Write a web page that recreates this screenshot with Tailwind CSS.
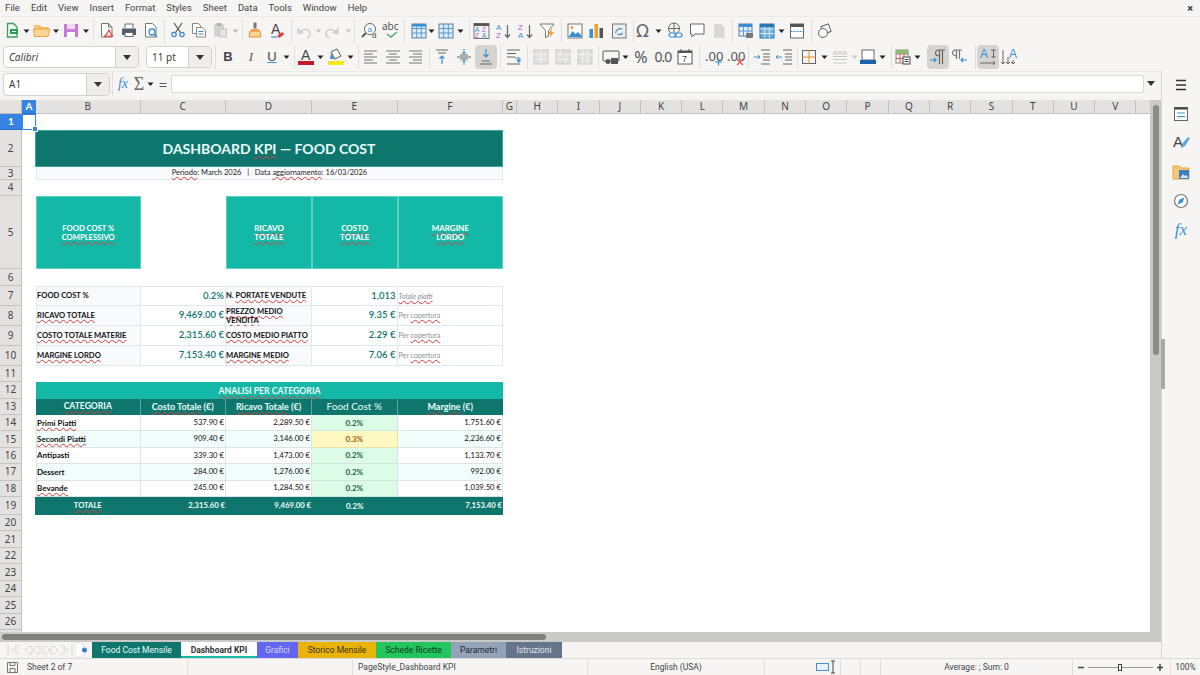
<!doctype html>
<html><head><meta charset="utf-8"><title>Dashboard KPI</title>
<script src="https://cdn.jsdelivr.net/npm/@tailwindcss/browser@4"></script></head>
<body class="w-[1200px] h-[675px] overflow-hidden bg-[#f6f5f4] text-[#3d3d3d] font-['Noto_Sans',sans-serif] flex flex-col">

<!-- menu -->
<nav class="h-[17px] shrink-0 flex items-center pl-[5px] gap-[11px] text-[9.5px] font-['Roboto',sans-serif] leading-none text-[#444] border-b border-[#ecebe9]">
<span>File</span><span>Edit</span><span>View</span><span>Insert</span><span>Format</span><span>Styles</span><span>Sheet</span><span>Data</span><span>Tools</span><span>Window</span><span>Help</span>
<span class="ml-auto mr-[7px] text-[11px] font-bold text-[#333]">×</span>
</nav>

<!-- standard toolbar -->
<div class="h-[28px] shrink-0 flex items-center pl-px">
<svg width="22" height="24"><path d="M6.5 4.5h6l3.5 3.5v10H6.5z" fill="#f1f8f1" stroke="#3f9c5a" stroke-width="1.3"/><rect x="9" y="10" width="8" height="5" fill="#2e9e57"/><path d="M11 12.5h4" stroke="#fff"/></svg>
<svg width="7" height="24"><path d="M.5 10.5h6l-3 3.500z" fill="#222"/></svg>
<svg width="22" height="24"><path d="M4 6h6l2 2h7v4H4z" fill="#f5c06a"/><path d="M4.500 17.500 3.500 10h16L18 17.500z" fill="#fbd596" stroke="#e8a33d"/></svg>
<svg width="8" height="24"><path d="M1 10.500h6l-3 3.500z" fill="#222"/></svg>
<svg width="22" height="24"><rect x="4" y="5" width="14" height="13" fill="#c77ad6"/><rect x="7" y="5" width="8" height="5" fill="#f3d9f7"/><rect x="7" y="13" width="8" height="5" fill="#fff"/></svg>
<svg width="8" height="24"><path d="M1 10.500h6l-3 3.500z" fill="#222"/></svg>
<i class="w-px h-6 ml-[3px] mr-[2px] bg-[#e2e0dd]"></i>
<svg width="22" height="24"><path d="M5.500 4.500h7l3.500 3.500v10H5.500zM12.500 4.500V8H16" fill="#fff" stroke="#777"/><path d="M13 11c-1 3-3 5-5 7 3-1 6-1 9-.5-2-1.500-3-4-4-6.500z" fill="none" stroke="#e0534a" stroke-width="1.200"/></svg>
<svg width="22" height="24"><path d="M7 9V5h8v4" fill="#fff" stroke="#666"/><path d="M4 9.500h14v6.500H4z" fill="#4f5d68"/><rect x="7" y="13.500" width="8" height="4" fill="#fff" stroke="#666"/></svg>
<svg width="22" height="24"><path d="M5.500 4.500h7l3.500 3.500v10H5.500z" fill="#fff" stroke="#777"/><circle cx="12" cy="13" r="3" fill="#fff" stroke="#3b8fd0" stroke-width="1.300"/><path d="m14 15 3 3" stroke="#3b8fd0" stroke-width="1.500"/></svg>
<i class="w-px h-6 ml-[2px] mr-[2px] bg-[#e2e0dd]"></i>
<svg width="22" height="24"><path d="m7 4 6.500 9.500M15 4 8.500 13.500" stroke="#555" stroke-width="1.200"/><circle cx="7" cy="15.500" r="2.200" fill="none" stroke="#3584e4" stroke-width="1.200"/><circle cx="15" cy="15.500" r="2.200" fill="none" stroke="#3584e4" stroke-width="1.200"/></svg>
<svg class="-ml-px" width="22" height="24"><path d="M4.500 4.500h6l2 2v8h-8z" fill="#fff" stroke="#888"/><path d="M8.500 8.500h6l3 3v6.500h-9z" fill="#fff" stroke="#888"/><path d="M10.500 12.500h5M10.500 15h5" stroke="#3b8fd0"/></svg>
<svg width="22" height="24"><rect x="4" y="5.500" width="10" height="12" fill="#d2d2d0"/><rect x="6.500" y="4" width="5" height="3" fill="#b5b5b3"/><rect x="9.500" y="10" width="7" height="8" fill="#e4e4e2" stroke="#c3c3c1"/></svg>
<svg width="7" height="24"><path d="M.5 10.500h6l-3 3.500z" fill="#bdbdbb"/></svg>
<i class="w-px h-6 ml-[3px] mr-px bg-[#e2e0dd]"></i>
<svg width="22" height="24"><rect x="9.500" y="3.500" width="3" height="6" fill="#777"/><path d="M7 10h8v2H7z" fill="#f4a64a"/><path d="M6 12h10l1 6H5z" fill="#fbd596" stroke="#e58f2a"/></svg>
<svg width="22" height="24"><text x="5" y="15" font-size="14" font-family="Liberation Sans" fill="#444">A</text><path d="m11 17 5-4 2.500 2-5 4z" fill="#e0403a"/><path d="M5 18h6" stroke="#3b8fd0" stroke-width="1.200"/></svg>
<i class="w-px h-6 ml-[3px] bg-[#e2e0dd]"></i>
<svg width="22" height="24"><path d="M8 14c3-5 9-4 10 0 .5 2-1 4-3 5" fill="none" stroke="#cfcfcd" stroke-width="1.500"/><path d="M5 8.500l.5 7 6.500-1.500z" fill="#cfcfcd"/></svg>
<svg class="ml-px" width="7" height="24"><path d="M.5 10.500h6l-3 3.500z" fill="#c9c9c7"/></svg>
<svg width="22" height="24"><path d="M14 14c-3-5-9-4-10 0-.5 2 1 4 3 5" fill="none" stroke="#cfcfcd" stroke-width="1.500"/><path d="M17 8.500l-.5 7-6.500-1.500z" fill="#cfcfcd"/></svg>
<svg class="ml-px" width="7" height="24"><path d="M.5 10.500h6l-3 3.500z" fill="#c9c9c7"/></svg>
<i class="w-px h-6 ml-[2px] mr-[3px] bg-[#e2e0dd]"></i>
<svg width="22" height="24"><circle cx="12" cy="10" r="5.500" fill="#fff" stroke="#666"/><path d="m8 14-4 4" stroke="#555" stroke-width="2"/><text x="9.500" y="12.500" font-size="8" font-family="Liberation Sans" fill="#3b8fd0">a</text><text x="14" y="19" font-size="8" font-family="Liberation Sans" fill="#444">d</text></svg>
<svg width="22" height="24"><text x="2" y="11" font-size="10" font-family="Noto Sans" fill="#555">abc</text><path d="m7 15 4 3 6-5" fill="none" stroke="#4caf6d" stroke-width="1.500"/></svg>
<i class="w-px h-6 ml-[2px] mr-[3px] bg-[#e2e0dd]"></i>
<svg width="22" height="24"><rect x="4" y="5" width="14" height="14" fill="#dcecf9" stroke="#5a7f9f"/><path d="M4 9.500h14M4 14h14M8.700 5v14M13.300 5v14" stroke="#5a9bd0"/><rect x="4" y="5" width="14" height="2.500" fill="#3b8fd0"/></svg>
<svg class="-ml-[2px]" width="7" height="24"><path d="M.5 10.500h6l-3 3.500z" fill="#222"/></svg>
<svg width="22" height="24"><rect x="4" y="5" width="14" height="14" fill="#dcecf9" stroke="#5a7f9f"/><path d="M4 9.500h14M4 14h14M8.700 5v14M13.300 5v14" stroke="#5a9bd0"/></svg>
<svg width="7" height="24"><path d="M.5 10.500h6l-3 3.500z" fill="#222"/></svg>
<i class="w-px h-6 ml-[5px] bg-[#e2e0dd]"></i>
<svg width="22" height="24"><rect x="4" y="4.500" width="15" height="15" fill="#f2f2f0" stroke="#777"/><rect x="4" y="4.500" width="15" height="2.500" fill="#555"/><text x="5" y="13" font-size="6.500" font-family="Liberation Sans" fill="#3b8fd0">A</text><text x="12" y="13" font-size="6.500" font-family="Liberation Sans" fill="#c05bc9">Z</text><text x="5" y="19" font-size="6.500" font-family="Liberation Sans" fill="#c05bc9">Z</text><text x="12" y="19" font-size="6.500" font-family="Liberation Sans" fill="#3b8fd0">A</text></svg>
<svg class="ml-px" width="22" height="24"><text x="3" y="11" font-size="8" font-family="Liberation Sans" fill="#3b8fd0">A</text><text x="3" y="19" font-size="8" font-family="Liberation Sans" fill="#c05bc9">Z</text><path d="M14.500 6v12M12 15.500l2.500 3 2.500-3" fill="none" stroke="#666" stroke-width="1.200"/></svg>
<svg width="22" height="24"><text x="3" y="11" font-size="8" font-family="Liberation Sans" fill="#c05bc9">Z</text><text x="3" y="19" font-size="8" font-family="Liberation Sans" fill="#3b8fd0">A</text><path d="M14.500 6v12M12 15.500l2.500 3 2.500-3" fill="none" stroke="#666" stroke-width="1.200"/></svg>
<svg class="-ml-px" width="22" height="24"><path d="M4 5h14l-5.500 6.500V17l-3 1.500v-7z" fill="#fff" stroke="#777"/><path d="m16 9-4 6h2.500l-1 4 4.500-6h-2.500z" fill="#f0a030"/></svg>
<i class="w-px h-6 ml-[3px] mr-[2px] bg-[#e2e0dd]"></i>
<svg width="22" height="24"><rect x="4" y="5" width="14" height="14" fill="#fff" stroke="#777"/><path d="m4.500 18 4-6 3 3 2.500-2 4 4v1z" fill="#3b8fd0"/><circle cx="8" cy="8.500" r="1.500" fill="#f0a030"/></svg>
<svg class="-ml-px" width="22" height="24"><rect x="4.500" y="10" width="3.500" height="9" fill="#3b8fd0"/><rect x="9.500" y="5" width="3.500" height="14" fill="#f0a030"/><rect x="14.500" y="9" width="3.500" height="10" fill="#555"/></svg>
<svg class="ml-px" width="22" height="24"><rect x="4.500" y="5" width="13.500" height="14" fill="#efefed" stroke="#777"/><path d="M7.500 14a5 5 0 0 1 7-4m0 4a4 4 0 0 1-5 1" fill="none" stroke="#3b8fd0" stroke-width="1.200"/></svg>
<i class="w-px h-6 ml-[3px] -mr-px bg-[#e2e0dd]"></i>
<svg width="22" height="24"><text x="3" y="18" font-size="17" font-family="DejaVu Sans" fill="#666">Ω</text></svg>
<svg width="7" height="24"><path d="M.5 10.500h6l-3 3.500z" fill="#222"/></svg>
<svg class="ml-[2px]" width="22" height="24"><circle cx="10" cy="9.500" r="5.500" fill="none" stroke="#666"/><path d="M4.500 9.500h11M10 4v11" stroke="#666"/><rect x="5" y="14" width="7" height="4" rx="2" fill="#f6f5f4" stroke="#3b8fd0" stroke-width="1.200"/><rect x="11" y="14" width="7" height="4" rx="2" fill="none" stroke="#3b8fd0" stroke-width="1.200"/></svg>
<svg width="22" height="24"><path d="M4.500 5h13.500v10H9l-3 3v-3H4.500z" fill="#fff" stroke="#666"/></svg>
<svg width="22" height="24"><path d="M6 5h7l3.500 3.500V19H6z" fill="#d8d8d6"/></svg>
<i class="w-px h-6 ml-[2px] mr-[2px] bg-[#e2e0dd]"></i>
<svg width="22" height="24"><rect x="4" y="5" width="13" height="12" fill="#e6f0f9" stroke="#5a7f9f"/><rect x="4" y="5" width="13" height="3" fill="#3b8fd0"/><path d="M4 12h13M8.500 8v9M13 8v9" stroke="#5a9bd0"/><rect x="11" y="14" width="7" height="5" rx="1" fill="#777"/></svg>
<svg class="-ml-px" width="22" height="24"><rect x="4" y="5" width="14" height="14" fill="#6fb0e3" stroke="#2d75ad"/><path d="M4 10h14M4 14.500h14M8.700 5v14M13.300 5v14" stroke="#d5e8f7"/><rect x="4" y="5" width="14" height="3" fill="#2d75ad"/></svg>
<svg width="7" height="24"><path d="M.5 10.500h6l-3 3.500z" fill="#222"/></svg>
<svg class="ml-px" width="22" height="24"><rect x="4.500" y="5" width="13" height="14" fill="#fff" stroke="#666"/><rect x="4.500" y="5" width="13" height="3" fill="#555"/><path d="M4.500 12.500h13" stroke="#3b8fd0" stroke-dasharray="2 1"/></svg>
<i class="w-px h-6 ml-[3px] mr-[2px] bg-[#e2e0dd]"></i>
<svg width="22" height="24"><rect x="8" y="6" width="8" height="8" fill="none" stroke="#666" transform="rotate(-20 12 10)"/><circle cx="9" cy="14" r="4.500" fill="#f6f5f4" stroke="#666"/></svg>
</div>

<!-- formatting toolbar -->
<div class="h-[26px] shrink-0 flex items-center pl-[3px] pb-[2px]">
<div class="w-[136px] h-[22px] flex rounded-[4px] border border-[#d3d1ce] bg-white overflow-hidden">
<span class="flex-1 pl-[5px] text-[10px] italic leading-[20px]">Calibri</span>
<span class="w-[23px] border-l border-[#d3d1ce] bg-[#efeeec] flex items-center justify-center"><svg width="8" height="5"><path d="M0 0h8L4 5z" fill="#333"/></svg></span></div>
<div class="ml-[7px] w-[66px] h-[22px] flex rounded-[4px] border border-[#d3d1ce] bg-white overflow-hidden">
<span class="flex-1 pl-[5px] text-[10px] leading-[20px]">11 pt</span>
<span class="w-[23px] border-l border-[#d3d1ce] bg-[#efeeec] flex items-center justify-center"><svg width="8" height="5"><path d="M0 0h8L4 5z" fill="#333"/></svg></span></div>
<i class="w-px h-6 ml-[3px] mr-px bg-[#e2e0dd]"></i>
<span class="w-[22px] text-center text-[13px] font-bold font-['Liberation_Sans',sans-serif] text-[#444]">B</span>
<span class="ml-px w-[22px] text-center text-[13px] italic font-['Liberation_Serif',serif] text-[#555]">I</span>
<span class="-ml-px w-[22px] text-center text-[13px] font-['Liberation_Sans',sans-serif] text-[#444] underline decoration-[#3b8fd0]">U</span>
<svg width="7" height="24"><path d="M.5 10.500h6l-3 3.500z" fill="#222"/></svg>
<i class="w-px h-6 ml-[4px] bg-[#e2e0dd]"></i>
<svg width="22" height="24"><text x="6" y="15" font-size="14" font-family="Liberation Sans" fill="#444">A</text><rect x="3" y="16" width="16" height="4" fill="#c01c28"/></svg>
<svg width="7" height="24"><path d="M.5 10.500h6l-3 3.500z" fill="#222"/></svg>
<svg class="ml-px" width="22" height="24"><path d="m6 7 6-3 4 7-6 3z" fill="#fff" stroke="#555"/><path d="m6 8 3 6H5z" fill="#3b8fd0"/><rect x="3" y="16" width="16" height="4" fill="#f6e71d"/></svg>
<svg width="7" height="24"><path d="M.5 10.500h6l-3 3.500z" fill="#222"/></svg>
<i class="w-px h-6 ml-[4px] mr-px bg-[#e2e0dd]"></i>
<svg width="22" height="24"><path d="M4 6h13M4 9h9M4 12h13M4 15h9M4 18h13" stroke="#777"/></svg>
<svg width="22" height="24"><path d="M4 6h14M7 9h8M4 12h14M7 15h8M4 18h14" stroke="#777"/></svg>
<svg width="22" height="24"><path d="M5 6h13M9 9h9M5 12h13M9 15h9M5 18h13" stroke="#777"/></svg>
<i class="w-px h-6 ml-[3px] mr-px bg-[#e2e0dd]"></i>
<svg width="22" height="24"><path d="M5 5h12M7 8h8" stroke="#666"/><path d="M11 19v-8M8.500 13.500l2.500-2.500 2.500 2.500" fill="none" stroke="#3b8fd0" stroke-width="1.200"/></svg>
<svg width="22" height="24"><path d="M4 12h14M7 10h8M7 14h8" stroke="#666"/><path d="M11 4v5M9 7l2 2 2-2M11 20v-5M9 17l2-2 2 2" fill="none" stroke="#3b8fd0"/></svg>
<span class="w-[22px] h-[24px] rounded-[4px] bg-[#d6d4d0] flex items-center justify-center"><svg width="22" height="24"><path d="M11 4v8M8.500 9.500 11 12l2.500-2.500" fill="none" stroke="#3b8fd0" stroke-width="1.200"/><path d="M7 16h8M5 19h12" stroke="#666"/></svg></span>
<i class="w-px h-6 ml-[3px] mr-[2px] bg-[#e2e0dd]"></i>
<svg width="22" height="24"><path d="M4 5h13M4 8.500h9M4 12h8M4 19h13" stroke="#666"/><path d="M12 13h5v2l-3 .5" fill="none" stroke="#3b8fd0"/><path d="m14 13.500 4 2.500-3 2z" fill="#3b8fd0"/></svg>
<i class="w-px h-6 ml-[2px] mr-[2px] bg-[#e2e0dd]"></i>
<svg width="22" height="24"><rect x="4" y="5" width="14" height="14" fill="#e0e0de" stroke="#c8c8c6"/><path d="M4 9.500h14M4 14h14M11 5v14" stroke="#f2f2f0"/></svg>
<svg width="22" height="24"><rect x="4" y="5" width="14" height="14" fill="#e0e0de" stroke="#c8c8c6"/><path d="M4 9.500h14M4 14h14M8.500 5v4M13.500 14v5" stroke="#f2f2f0"/></svg>
<svg width="22" height="24"><rect x="4" y="5" width="14" height="14" fill="#e0e0de" stroke="#c8c8c6"/><path d="M4 9.500h14M8.700 5v14M13.300 5v14" stroke="#f2f2f0"/></svg>
<i class="w-px h-6 ml-[2px] mr-px bg-[#e2e0dd]"></i>
<svg width="22" height="24"><rect x="3" y="6" width="16" height="10" rx="1" fill="#f6f5f4" stroke="#555"/><circle cx="8" cy="16.500" r="2.500" fill="#555"/><rect x="11" y="13" width="7" height="6" fill="#555"/></svg>
<svg width="7" height="24"><path d="M.5 10.500h6l-3 3.500z" fill="#222"/></svg>
<span class="ml-px w-[22px] text-center text-[16px] leading-none text-[#555]">%</span>
<span class="w-[22px] text-center text-[14px] leading-none tracking-[-1px] text-[#555]">0.0</span>
<svg width="22" height="24"><rect x="4" y="6" width="14" height="13" fill="#fff" stroke="#555"/><rect x="4" y="6" width="14" height="2" fill="#555"/><path d="M7 4v3M15 4v3" stroke="#555"/><text x="8" y="17" font-size="9" font-family="Liberation Sans" fill="#444">7</text></svg>
<i class="w-px h-6 ml-[3px] mr-[2px] bg-[#e2e0dd]"></i>
<svg width="22" height="24"><text x="3" y="16" font-size="13" font-family="Noto Sans" fill="#555">.00</text><path d="M13 17h7M16.500 13.500v7" stroke="#3b8fd0" stroke-width="1.200"/></svg>
<svg width="22" height="24"><text x="3" y="16" font-size="13" font-family="Noto Sans" fill="#555">.00</text><path d="m13 14 6 6m0-6-6 6" stroke="#e0534a" stroke-width="1.200"/></svg>
<i class="w-px h-6 ml-[2px] mr-[2px] bg-[#e2e0dd]"></i>
<svg width="22" height="24"><path d="M10 5h9M12 9h7M12 12h7M12 15h7M10 19h9" stroke="#666"/><path d="M3 12h6M7 10l2 2-2 2" fill="none" stroke="#3b8fd0"/></svg>
<svg width="22" height="24"><path d="M10 5h9M12 9h7M12 12h7M12 15h7M10 19h9" stroke="#666"/><path d="M9 12H3M5 10l-2 2 2 2" fill="none" stroke="#3b8fd0"/></svg>
<i class="w-px h-6 ml-[2px] bg-[#e2e0dd]"></i>
<svg width="22" height="24"><rect x="4.500" y="5.500" width="13" height="13" fill="none" stroke="#666"/><path d="M11 5.500v13M4.500 12h13" stroke="#e58f2a"/></svg>
<svg class="ml-px" width="7" height="24"><path d="M.5 10.500h6l-3 3.500z" fill="#222"/></svg>
<svg class="ml-px" width="22" height="24"><path d="M4 7h14M4 9h14M4 11.500h14M4 14.500h14M4 18h14" stroke="#c6c6c4"/></svg>
<svg width="7" height="24"><path d="M.5 10.500h6l-3 3.500z" fill="#c9c9c7"/></svg>
<svg class="-ml-px" width="22" height="24"><rect x="5" y="5" width="12" height="10" fill="#fff" stroke="#666"/><rect x="3" y="15" width="16" height="4" fill="#1c64a8"/></svg>
<svg width="7" height="24"><path d="M.5 10.500h6l-3 3.500z" fill="#222"/></svg>
<i class="w-px h-6 ml-[5px] bg-[#e2e0dd]"></i>
<svg width="22" height="24"><rect x="4" y="5" width="12" height="13" fill="#fff" stroke="#888"/><path d="M4 9h12M4 13.500h12M8 5v13M12 5v13" stroke="#c55"/><rect x="4" y="5" width="12" height="4" fill="#8dbb75"/><rect x="11" y="12" width="7" height="7" fill="#fff" stroke="#444"/><path d="M12.500 14.500h4M12.500 16.500h4" stroke="#444"/></svg>
<svg width="7" height="24"><path d="M.5 10.500h6l-3 3.500z" fill="#222"/></svg>
<span class="ml-[6px] w-[22px] h-[24px] rounded-[4px] bg-[#d6d4d0] flex items-center justify-center"><svg width="22" height="24"><path d="M11 5h7M12.500 5v14M15.500 5v14M12.500 5c-3 0-4 1-4 3s1 3 4 3" fill="none" stroke="#666" stroke-width="1.200"/><path d="M3 15h6M7 13l2 2-2 2" fill="none" stroke="#3b8fd0" stroke-width="1.200"/></svg></span>
<svg width="22" height="24"><path d="M5 5h8M7.500 5v9M10.500 5v9M7.500 5c-3 0-4 1-4 2.500S5 11 7.500 11" fill="none" stroke="#777" stroke-width="1.200"/><path d="M18 15h-6M14 13l-2 2 2 2" fill="none" stroke="#3b8fd0" stroke-width="1.200"/></svg>
<i class="w-px h-6 ml-[4px] mr-px bg-[#e2e0dd]"></i>
<span class="w-[22px] h-[24px] rounded-[4px] bg-[#d6d4d0] flex items-center justify-center"><svg width="22" height="24"><text x="3" y="13" font-size="12" font-family="Liberation Sans" fill="#3b8fd0">A</text><path d="M14 5h5M16.500 5v8M14.500 11l2 2 2-2" fill="none" stroke="#666"/><path d="M3 18h15M16 16l2 2-2 2" fill="none" stroke="#666"/></svg></span>
<svg width="22" height="24"><text x="10" y="13" font-size="12" font-family="Liberation Sans" fill="#3b8fd0">A</text><path d="M4 5v14M2 17l2 2 2-2M9 12v7M7 17l2 2 2-2M14 15v4M12 17l2 2 2-2" fill="none" stroke="#666"/></svg>
</div>

<!-- work area -->
<div class="flex-1 min-h-0 flex">
<div class="w-[1161px] shrink-0 flex flex-col">

<!-- formula bar -->
<div class="h-[29px] shrink-0 flex items-center pl-[3px] border-t border-[#eceae8] pb-[4px]">
<div class="w-[107px] h-[23px] flex rounded-[4px] border border-[#d3d1ce] bg-white overflow-hidden">
<span class="flex-1 pl-[5px] text-[10px] leading-[21px]">A1</span>
<span class="w-[23px] border-l border-[#d3d1ce] bg-[#efeeec] flex items-center justify-center"><svg width="8" height="5"><path d="M0 0h8L4 5z" fill="#333"/></svg></span></div>
<i class="w-px h-6 ml-[2px] mr-[2px] bg-[#e2e0dd]"></i>
<span class="w-[16px] text-center text-[14px] italic font-['Liberation_Serif',serif] text-[#3b8fd0] leading-none">fx</span>
<span class="ml-[1px] w-[14px] text-center text-[18px] leading-none text-[#666] font-['Liberation_Serif',serif]">Σ</span>
<svg class="ml-[1px]" width="7" height="24"><path d="M.5 10.500h6l-3 3.500z" fill="#222"/></svg>
<span class="ml-[3px] w-[12px] text-center text-[15px] leading-none text-[#555]">=</span>
<div class="ml-[2px] w-[973px] h-[18px] bg-white border border-[#dcdad7] rounded-[2px]"></div>
<svg class="ml-[2px]" width="10" height="6"><path d="M1 0h8L5 5z" fill="#333"/></svg>
</div>

<!-- sheet -->
<div class="flex-1 min-h-0 flex">
<div class="w-[1150px] shrink-0 overflow-hidden bg-white font-['Lato',sans-serif] text-[#111] grid grid-cols-[22px_14px_104.5px_85.5px_86px_85.5px_105.5px_14px_repeat(15,41.3px)_1fr] grid-rows-[14px_16px_37px_13px_16px_73px_17px_repeat(4,20px)_16px_16.5px_16.5px_repeat(5,16.4px)_18px_repeat(7,16.5px)_1fr]">
<!-- column headers -->
<div class="bg-[#e3e2e0] border-r border-b border-[#bdbcb9]"></div>
<div class="bg-[#3584e4] text-white font-bold text-[10px] flex items-center justify-center border-b border-[#2a6fc4]">A</div>
<div class="bg-[#e3e2e0] border-r border-b border-[#c4c3c0] text-[#444] text-[10px] font-['Noto_Sans'] flex items-center justify-center">B</div>
<div class="bg-[#e3e2e0] border-r border-b border-[#c4c3c0] text-[#444] text-[10px] font-['Noto_Sans'] flex items-center justify-center">C</div>
<div class="bg-[#e3e2e0] border-r border-b border-[#c4c3c0] text-[#444] text-[10px] font-['Noto_Sans'] flex items-center justify-center">D</div>
<div class="bg-[#e3e2e0] border-r border-b border-[#c4c3c0] text-[#444] text-[10px] font-['Noto_Sans'] flex items-center justify-center">E</div>
<div class="bg-[#e3e2e0] border-r border-b border-[#c4c3c0] text-[#444] text-[10px] font-['Noto_Sans'] flex items-center justify-center">F</div>
<div class="bg-[#e3e2e0] border-r border-b border-[#c4c3c0] text-[#444] text-[10px] font-['Noto_Sans'] flex items-center justify-center">G</div>
<div class="bg-[#e3e2e0] border-r border-b border-[#c4c3c0] text-[#444] text-[10px] font-['Noto_Sans'] flex items-center justify-center">H</div>
<div class="bg-[#e3e2e0] border-r border-b border-[#c4c3c0] text-[#444] text-[10px] font-['Noto_Sans'] flex items-center justify-center">I</div>
<div class="bg-[#e3e2e0] border-r border-b border-[#c4c3c0] text-[#444] text-[10px] font-['Noto_Sans'] flex items-center justify-center">J</div>
<div class="bg-[#e3e2e0] border-r border-b border-[#c4c3c0] text-[#444] text-[10px] font-['Noto_Sans'] flex items-center justify-center">K</div>
<div class="bg-[#e3e2e0] border-r border-b border-[#c4c3c0] text-[#444] text-[10px] font-['Noto_Sans'] flex items-center justify-center">L</div>
<div class="bg-[#e3e2e0] border-r border-b border-[#c4c3c0] text-[#444] text-[10px] font-['Noto_Sans'] flex items-center justify-center">M</div>
<div class="bg-[#e3e2e0] border-r border-b border-[#c4c3c0] text-[#444] text-[10px] font-['Noto_Sans'] flex items-center justify-center">N</div>
<div class="bg-[#e3e2e0] border-r border-b border-[#c4c3c0] text-[#444] text-[10px] font-['Noto_Sans'] flex items-center justify-center">O</div>
<div class="bg-[#e3e2e0] border-r border-b border-[#c4c3c0] text-[#444] text-[10px] font-['Noto_Sans'] flex items-center justify-center">P</div>
<div class="bg-[#e3e2e0] border-r border-b border-[#c4c3c0] text-[#444] text-[10px] font-['Noto_Sans'] flex items-center justify-center">Q</div>
<div class="bg-[#e3e2e0] border-r border-b border-[#c4c3c0] text-[#444] text-[10px] font-['Noto_Sans'] flex items-center justify-center">R</div>
<div class="bg-[#e3e2e0] border-r border-b border-[#c4c3c0] text-[#444] text-[10px] font-['Noto_Sans'] flex items-center justify-center">S</div>
<div class="bg-[#e3e2e0] border-r border-b border-[#c4c3c0] text-[#444] text-[10px] font-['Noto_Sans'] flex items-center justify-center">T</div>
<div class="bg-[#e3e2e0] border-r border-b border-[#c4c3c0] text-[#444] text-[10px] font-['Noto_Sans'] flex items-center justify-center">U</div>
<div class="bg-[#e3e2e0] border-r border-b border-[#c4c3c0] text-[#444] text-[10px] font-['Noto_Sans'] flex items-center justify-center">V</div>
<div class="bg-[#e3e2e0] border-b border-[#c4c3c0]"></div>

<!-- row 1 -->
<div class="col-start-1 bg-[#3584e4] text-white font-bold text-[10px] flex items-center justify-center border-b border-[#2a6fc4]">1</div>
<div class="relative border border-[#3584e4]"><i class="absolute -right-[3px] -bottom-[3px] w-[4px] h-[4px] bg-[#3584e4] border border-white box-content"></i></div>
<!-- row 2 -->
<div class="col-start-1 bg-[#e3e2e0] border-r border-b border-[#c4c3c0] text-[#444] text-[10px] font-['Noto_Sans'] flex items-center justify-center">2</div>
<div class="col-start-3 col-span-5 -ml-px bg-[#0f766e] border border-[#3aa598] text-[#eafffb] font-bold text-[14px] flex items-center justify-center">DASHBOARD&nbsp;<span class="underline decoration-wavy decoration-[#d83a3a] decoration-1">KPI</span>&nbsp;— FOOD COST</div>
<!-- row 3 -->
<div class="col-start-1 bg-[#e3e2e0] border-r border-b border-[#c4c3c0] text-[#444] text-[10px] font-['Noto_Sans'] flex items-center justify-center">3</div>
<div class="col-start-3 col-span-5 bg-[#f8fafc] border-b border-x border-[#e2e8f0] text-[7.5px] text-[#222] flex items-center justify-center whitespace-pre"><span class="underline decoration-wavy decoration-[#d83a3a] decoration-1">Periodo</span>: March 2026   |   Data <span class="underline decoration-wavy decoration-[#d83a3a] decoration-1">aggiornamento</span>: 16/03/2026</div>
<!-- row 4 -->
<div class="col-start-1 bg-[#e3e2e0] border-r border-b border-[#c4c3c0] text-[#444] text-[10px] font-['Noto_Sans'] flex items-center justify-center">4</div>
<!-- row 5 -->
<div class="col-start-1 bg-[#e3e2e0] border-r border-b border-[#c4c3c0] text-[#444] text-[10px] font-['Noto_Sans'] flex items-center justify-center">5</div>
<div class="col-start-3 bg-[#14b8a6] border border-[#5fd0c3] text-white font-bold text-[7.6px] leading-[9px] text-center flex items-center justify-center"><span>FOOD COST %<br><span class="underline decoration-wavy decoration-[#d83a3a] decoration-1">COMPLESSIVO</span></span></div>
<div class="col-start-5 bg-[#14b8a6] border border-[#5fd0c3] text-white font-bold text-[8px] leading-[9px] text-center flex items-center justify-center"><span class="underline decoration-wavy decoration-[#d83a3a] decoration-1">RICAVO<br>TOTALE</span></div>
<div class="bg-[#14b8a6] border border-[#5fd0c3] text-white font-bold text-[8px] leading-[9px] text-center flex items-center justify-center"><span class="underline decoration-wavy decoration-[#d83a3a] decoration-1">COSTO<br>TOTALE</span></div>
<div class="bg-[#14b8a6] border border-[#5fd0c3] text-white font-bold text-[8px] leading-[9px] text-center flex items-center justify-center"><span class="underline decoration-wavy decoration-[#d83a3a] decoration-1">MARGINE<br>LORDO</span></div>
<!-- row 6 -->
<div class="col-start-1 bg-[#e3e2e0] border-r border-b border-[#c4c3c0] text-[#444] text-[10px] font-['Noto_Sans'] flex items-center justify-center">6</div>
<!-- row 7 -->
<div class="col-start-1 bg-[#e3e2e0] border-r border-b border-[#c4c3c0] text-[#444] text-[10px] font-['Noto_Sans'] flex items-center justify-center">7</div>
<div class="col-start-3 bg-[#f8fafc] border border-[#e2e8f0] font-bold text-[7.6px] flex items-center">FOOD COST %</div>
<div class="border-y border-r border-[#e2e8f0] text-[#0f766e] font-semibold text-[9.5px] pr-px flex items-center justify-end">0.2%</div>
<div class="bg-[#f8fafc] border-y border-r border-[#e2e8f0] font-bold text-[7.6px] flex items-center whitespace-nowrap"><span>N. <span class="underline decoration-wavy decoration-[#d83a3a] decoration-1">PORTATE VENDUTE</span></span></div>
<div class="border-y border-r border-[#e2e8f0] text-[#0f766e] font-semibold text-[9.5px] pr-px flex items-center justify-end">1,013</div>
<div class="border-y border-r border-[#e2e8f0] text-[#8a8f96] italic text-[7px] pl-px flex items-center"><span class="underline decoration-wavy decoration-[#d83a3a] decoration-1">Totale piatti</span></div>
<!-- row 8 -->
<div class="col-start-1 bg-[#e3e2e0] border-r border-b border-[#c4c3c0] text-[#444] text-[10px] font-['Noto_Sans'] flex items-center justify-center">8</div>
<div class="col-start-3 bg-[#f8fafc] border-x border-b border-[#e2e8f0] font-bold text-[7.6px] flex items-center"><span class="underline decoration-wavy decoration-[#d83a3a] decoration-1">RICAVO TOTALE</span></div>
<div class="border-b border-r border-[#e2e8f0] text-[#0f766e] font-semibold text-[9.5px] pr-px flex items-center justify-end">9,469.00 €</div>
<div class="bg-[#f8fafc] border-b border-r border-[#e2e8f0] font-bold text-[7.6px] leading-[9px] flex items-center"><span class="underline decoration-wavy decoration-[#d83a3a] decoration-1">PREZZO MEDIO<br>VENDITA</span></div>
<div class="border-b border-r border-[#e2e8f0] text-[#0f766e] font-semibold text-[9.5px] pr-px flex items-center justify-end">9.35 €</div>
<div class="border-b border-r border-[#e2e8f0] text-[#8a8f96] text-[7px] pl-px flex items-center"><span>Per <span class="underline decoration-wavy decoration-[#d83a3a] decoration-1">copertura</span></span></div>
<!-- row 9 -->
<div class="col-start-1 bg-[#e3e2e0] border-r border-b border-[#c4c3c0] text-[#444] text-[10px] font-['Noto_Sans'] flex items-center justify-center">9</div>
<div class="col-start-3 bg-[#f8fafc] border-x border-b border-[#e2e8f0] font-bold text-[7.6px] flex items-center whitespace-nowrap"><span class="underline decoration-wavy decoration-[#d83a3a] decoration-1">COSTO TOTALE MATERIE</span></div>
<div class="border-b border-r border-[#e2e8f0] text-[#0f766e] font-semibold text-[9.5px] pr-px flex items-center justify-end">2,315.60 €</div>
<div class="bg-[#f8fafc] border-b border-r border-[#e2e8f0] font-bold text-[7.6px] flex items-center whitespace-nowrap"><span class="underline decoration-wavy decoration-[#d83a3a] decoration-1">COSTO MEDIO PIATTO</span></div>
<div class="border-b border-r border-[#e2e8f0] text-[#0f766e] font-semibold text-[9.5px] pr-px flex items-center justify-end">2.29 €</div>
<div class="border-b border-r border-[#e2e8f0] text-[#8a8f96] text-[7px] pl-px flex items-center"><span>Per <span class="underline decoration-wavy decoration-[#d83a3a] decoration-1">copertura</span></span></div>
<!-- row 10 -->
<div class="col-start-1 bg-[#e3e2e0] border-r border-b border-[#c4c3c0] text-[#444] text-[10px] font-['Noto_Sans'] flex items-center justify-center">10</div>
<div class="col-start-3 bg-[#f8fafc] border-x border-b border-[#e2e8f0] font-bold text-[7.6px] flex items-center"><span class="underline decoration-wavy decoration-[#d83a3a] decoration-1">MARGINE LORDO</span></div>
<div class="border-b border-r border-[#e2e8f0] text-[#0f766e] font-semibold text-[9.5px] pr-px flex items-center justify-end">7,153.40 €</div>
<div class="bg-[#f8fafc] border-b border-r border-[#e2e8f0] font-bold text-[7.6px] flex items-center"><span class="underline decoration-wavy decoration-[#d83a3a] decoration-1">MARGINE MEDIO</span></div>
<div class="border-b border-r border-[#e2e8f0] text-[#0f766e] font-semibold text-[9.5px] pr-px flex items-center justify-end">7.06 €</div>
<div class="border-b border-r border-[#e2e8f0] text-[#8a8f96] text-[7px] pl-px flex items-center"><span>Per <span class="underline decoration-wavy decoration-[#d83a3a] decoration-1">copertura</span></span></div>
<!-- row 11 -->
<div class="col-start-1 bg-[#e3e2e0] border-r border-b border-[#c4c3c0] text-[#444] text-[10px] font-['Noto_Sans'] flex items-center justify-center">11</div>
<!-- row 12 -->
<div class="col-start-1 bg-[#e3e2e0] border-r border-b border-[#c4c3c0] text-[#444] text-[10px] font-['Noto_Sans'] flex items-center justify-center">12</div>
<div class="col-start-3 col-span-5 bg-[#14b8a6] text-[#f0fdfa] font-bold text-[8.7px] flex items-center justify-center"><span class="underline decoration-wavy decoration-[#d83a3a] decoration-1">ANALISI PER CATEGORIA</span></div>
<!-- row 13 -->
<div class="col-start-1 bg-[#e3e2e0] border-r border-b border-[#c4c3c0] text-[#444] text-[10px] font-['Noto_Sans'] flex items-center justify-center">13</div>
<div class="col-start-3 bg-[#0f766e] border-r border-[#5aa8a0] text-[#e6fffb] font-bold text-[8.6px] flex items-center justify-center"><span class="underline decoration-wavy decoration-[#d83a3a] decoration-1">CATEGORIA</span></div>
<div class="bg-[#0f766e] border-r border-[#5aa8a0] text-[#e6fffb] font-bold text-[9px] flex items-center justify-center"><span><span class="underline decoration-wavy decoration-[#d83a3a] decoration-1">Costo Totale</span> (€)</span></div>
<div class="bg-[#0f766e] border-r border-[#5aa8a0] text-[#e6fffb] font-bold text-[9px] flex items-center justify-center"><span><span class="underline decoration-wavy decoration-[#d83a3a] decoration-1">Ricavo Totale</span> (€)</span></div>
<div class="bg-[#0f766e] border-r border-[#5aa8a0] text-[#e6fffb] text-[10px] flex items-center justify-center">Food Cost %</div>
<div class="bg-[#0f766e] text-[#e6fffb] font-bold text-[9px] flex items-center justify-center"><span><span class="underline decoration-wavy decoration-[#d83a3a] decoration-1">Margine</span> (€)</span></div>
<!-- row 14 -->
<div class="col-start-1 bg-[#e3e2e0] border-r border-b border-[#c4c3c0] text-[#444] text-[10px] font-['Noto_Sans'] flex items-center justify-center">14</div>
<div class="col-start-3 bg-white border-x border-b border-[#dbe5e4] font-bold text-[8px] flex items-center"><span class="underline decoration-wavy decoration-[#d83a3a] decoration-1">Primi Piatti</span></div>
<div class="bg-white border-r border-b border-[#dbe5e4] text-[7.7px] pr-px flex items-center justify-end">537.90 €</div>
<div class="bg-white border-r border-b border-[#dbe5e4] text-[7.7px] pr-px flex items-center justify-end">2,289.50 €</div>
<div class="bg-[#dcfce7] border-r border-b border-[#cfe8d8] text-[#166534] font-bold text-[8px] flex items-center justify-center">0.2%</div>
<div class="bg-white border-r border-b border-[#dbe5e4] text-[7.7px] pr-px flex items-center justify-end">1,751.60 €</div>
<!-- row 15 -->
<div class="col-start-1 bg-[#e3e2e0] border-r border-b border-[#c4c3c0] text-[#444] text-[10px] font-['Noto_Sans'] flex items-center justify-center">15</div>
<div class="col-start-3 bg-[#f0fdfa] border-x border-b border-[#dbe5e4] font-bold text-[8px] flex items-center"><span class="underline decoration-wavy decoration-[#d83a3a] decoration-1">Secondi Piatti</span></div>
<div class="bg-[#f0fdfa] border-r border-b border-[#dbe5e4] text-[7.7px] pr-px flex items-center justify-end">909.40 €</div>
<div class="bg-[#f0fdfa] border-r border-b border-[#dbe5e4] text-[7.7px] pr-px flex items-center justify-end">3,146.00 €</div>
<div class="bg-[#fef9c3] border-r border-b border-[#ecdfa8] text-[#a16207] font-bold text-[8px] flex items-center justify-center">0.3%</div>
<div class="bg-[#f0fdfa] border-r border-b border-[#dbe5e4] text-[7.7px] pr-px flex items-center justify-end">2,236.60 €</div>
<!-- row 16 -->
<div class="col-start-1 bg-[#e3e2e0] border-r border-b border-[#c4c3c0] text-[#444] text-[10px] font-['Noto_Sans'] flex items-center justify-center">16</div>
<div class="col-start-3 bg-white border-x border-b border-[#dbe5e4] font-bold text-[8px] flex items-center">Antipasti</div>
<div class="bg-white border-r border-b border-[#dbe5e4] text-[7.7px] pr-px flex items-center justify-end">339.30 €</div>
<div class="bg-white border-r border-b border-[#dbe5e4] text-[7.7px] pr-px flex items-center justify-end">1,473.00 €</div>
<div class="bg-[#dcfce7] border-r border-b border-[#cfe8d8] text-[#166534] font-bold text-[8px] flex items-center justify-center">0.2%</div>
<div class="bg-white border-r border-b border-[#dbe5e4] text-[7.7px] pr-px flex items-center justify-end">1,133.70 €</div>
<!-- row 17 -->
<div class="col-start-1 bg-[#e3e2e0] border-r border-b border-[#c4c3c0] text-[#444] text-[10px] font-['Noto_Sans'] flex items-center justify-center">17</div>
<div class="col-start-3 bg-[#f0fdfa] border-x border-b border-[#dbe5e4] font-bold text-[8px] flex items-center">Dessert</div>
<div class="bg-[#f0fdfa] border-r border-b border-[#dbe5e4] text-[7.7px] pr-px flex items-center justify-end">284.00 €</div>
<div class="bg-[#f0fdfa] border-r border-b border-[#dbe5e4] text-[7.7px] pr-px flex items-center justify-end">1,276.00 €</div>
<div class="bg-[#dcfce7] border-r border-b border-[#cfe8d8] text-[#166534] font-bold text-[8px] flex items-center justify-center">0.2%</div>
<div class="bg-[#f0fdfa] border-r border-b border-[#dbe5e4] text-[7.7px] pr-px flex items-center justify-end">992.00 €</div>
<!-- row 18 -->
<div class="col-start-1 bg-[#e3e2e0] border-r border-b border-[#c4c3c0] text-[#444] text-[10px] font-['Noto_Sans'] flex items-center justify-center">18</div>
<div class="col-start-3 bg-white border-x border-b border-[#dbe5e4] font-bold text-[8px] flex items-center"><span class="underline decoration-wavy decoration-[#d83a3a] decoration-1">Bevande</span></div>
<div class="bg-white border-r border-b border-[#dbe5e4] text-[7.7px] pr-px flex items-center justify-end">245.00 €</div>
<div class="bg-white border-r border-b border-[#dbe5e4] text-[7.7px] pr-px flex items-center justify-end">1,284.50 €</div>
<div class="bg-[#dcfce7] border-r border-b border-[#cfe8d8] text-[#166534] font-bold text-[8px] flex items-center justify-center">0.2%</div>
<div class="bg-white border-r border-b border-[#dbe5e4] text-[7.7px] pr-px flex items-center justify-end">1,039.50 €</div>
<!-- row 19 -->
<div class="col-start-1 bg-[#e3e2e0] border-r border-b border-[#c4c3c0] text-[#444] text-[10px] font-['Noto_Sans'] flex items-center justify-center">19</div>
<div class="col-start-3 -ml-px bg-[#0f766e] text-[#f0fdfa] font-bold text-[7.6px] flex items-center justify-center"><span class="underline decoration-wavy decoration-[#d83a3a] decoration-1">TOTALE</span></div>
<div class="bg-[#0f766e] text-[#f0fdfa] font-bold text-[7.7px] pr-px flex items-center justify-end">2,315.60 €</div>
<div class="bg-[#0f766e] text-[#f0fdfa] font-bold text-[7.7px] pr-px flex items-center justify-end">9,469.00 €</div>
<div class="bg-[#0f766e] text-[#f0fdfa] font-bold text-[8px] flex items-center justify-center">0.2%</div>
<div class="bg-[#0f766e] text-[#f0fdfa] font-bold text-[7.7px] pr-px flex items-center justify-end">7,153.40 €</div>
<!-- rows 20-27 -->
<div class="col-start-1 bg-[#e3e2e0] border-r border-b border-[#c4c3c0] text-[#444] text-[10px] font-['Noto_Sans'] flex items-center justify-center">20</div>
<div class="col-start-1 bg-[#e3e2e0] border-r border-b border-[#c4c3c0] text-[#444] text-[10px] font-['Noto_Sans'] flex items-center justify-center">21</div>
<div class="col-start-1 bg-[#e3e2e0] border-r border-b border-[#c4c3c0] text-[#444] text-[10px] font-['Noto_Sans'] flex items-center justify-center">22</div>
<div class="col-start-1 bg-[#e3e2e0] border-r border-b border-[#c4c3c0] text-[#444] text-[10px] font-['Noto_Sans'] flex items-center justify-center">23</div>
<div class="col-start-1 bg-[#e3e2e0] border-r border-b border-[#c4c3c0] text-[#444] text-[10px] font-['Noto_Sans'] flex items-center justify-center">24</div>
<div class="col-start-1 bg-[#e3e2e0] border-r border-b border-[#c4c3c0] text-[#444] text-[10px] font-['Noto_Sans'] flex items-center justify-center">25</div>
<div class="col-start-1 bg-[#e3e2e0] border-r border-b border-[#c4c3c0] text-[#444] text-[10px] font-['Noto_Sans'] flex items-center justify-center">26</div>
<div class="col-start-1 bg-[#e3e2e0] border-r border-[#c4c3c0]"></div>
</div>
<!-- vertical scrollbar -->
<div class="w-[11px] shrink-0 bg-[#c9c9c7] pl-[3px] pt-[5px]"><div class="w-[6px] h-[250px] rounded-full bg-[#8a8a88]"></div></div>
</div>

<!-- horizontal scrollbar -->
<div class="h-[10px] shrink-0 bg-[#c9c9c7] pl-[2px] pt-[2px] flex"><div class="w-[544px] h-[6px] rounded-full bg-[#7f7f7d]"></div></div>

<!-- sheet tabs -->
<div class="h-[16px] shrink-0 flex items-stretch text-[8.5px] font-['Roboto',sans-serif] leading-[16px]">
<svg class="ml-[5px] w-[70px]" width="70" height="16" fill="none" stroke="#d8d6d3"><path d="M3 2v12M12 3 7 8l5 5M15 3l-5 5 5 5M24 4l-4 4 4 4h3V4zM32 4l-4 4 4 4h3V4zM38 4h3l4 4-4 4h-3zM46 4h3l4 4-4 4h-3zM55 3l5 5-5 5M58 3l5 5-5 5M67 2v12"/></svg>
<svg width="17" height="16"><path d="M0 1h6l3 3v11H0z" fill="#fff" stroke="#e4e2df"/><circle cx="9.500" cy="8" r="2.500" fill="#3b7fc4"/></svg>
<span class="w-[89px] text-center bg-[#0f766e] text-[#e6fffb]">Food Cost Mensile</span>
<span class="w-[76px] text-center bg-white border-b-2 border-[#14b8a6] font-bold text-[#333]">Dashboard KPI</span>
<span class="w-[41px] text-center bg-[#6366f1] text-[#d5d6ff]">Grafici</span>
<span class="w-[78px] text-center bg-[#eab308] text-[#3f3208]">Storico Mensile</span>
<span class="w-[75px] text-center bg-[#22c55e] text-[#0f3d21]">Schede Ricette</span>
<span class="w-[55px] text-center bg-[#94a3b8] text-[#1f2937]">Parametri</span>
<span class="w-[56px] text-center bg-[#64748b] text-[#e2e8f0]">Istruzioni</span>
</div>
</div>

<!-- sidebar -->
<aside class="relative flex-1 border-l border-[#d8d6d3] flex flex-col items-center pt-[2px] gap-[5px]">
<svg width="24" height="24"><path d="M7 7.500h10M7 12h10M7 16.500h10" stroke="#333" stroke-width="1.500"/></svg>
<svg width="24" height="24"><rect x="5.500" y="5.500" width="13" height="13" fill="#fff" stroke="#666"/><path d="M5.500 6.500h13" stroke="#444" stroke-width="2"/><path d="M8 11h8M8 14.500h8" stroke="#3b8fd0"/></svg>
<svg width="24" height="24"><text x="4" y="16" font-size="15" font-family="Liberation Sans" fill="#444">A</text><path d="M19 6l-6 7-1 4 4-2 5-8z" fill="#5aa3dc"/></svg>
<svg width="24" height="24"><path d="M4 6h6l2 2h8v11H4z" fill="#f7c77a" stroke="#e8a33d"/><rect x="10" y="10" width="10" height="9" fill="#3b7fc4"/><path d="m11 18 3-4 2 2 1.500-1 2 3z" fill="#cfe5f6"/></svg>
<svg width="24" height="24"><circle cx="12" cy="12" r="6.500" fill="#fff" stroke="#777" stroke-width="1.200"/><path d="M15.500 8.500 13.500 13.500 8.500 15.500 10.500 10.500z" fill="#3b8fd0"/></svg>
<span class="w-6 h-6 text-center text-[17px] leading-6 italic font-['Liberation_Serif',serif] text-[#3b8fd0]">fx</span>
<i class="absolute -left-px top-[268px] w-[4px] h-[50px] bg-[#a8a8a6]"></i>
</aside>
</div>

<!-- status bar -->
<footer class="h-[17px] shrink-0 flex items-center text-[8.5px] font-['Roboto',sans-serif] leading-none text-[#444] border-t border-[#dcdad7]">
<div class="w-[187px] flex items-center pl-[6px] gap-[8px]"><svg width="13" height="13" fill="none" stroke="#777"><path d="M1.500 1.500h10v10h-10zM4 1.500v3h5v-3M4 11.500v-4h5v4"/></svg><span>Sheet 2 of 7</span></div>
<i class="w-px h-[15px] bg-[#e2e0dd]"></i>
<div class="w-[164px]"></div>
<i class="w-px h-[15px] bg-[#e2e0dd]"></i>
<div class="w-[234px] pl-[5px]">PageStyle_Dashboard KPI</div>
<i class="w-px h-[15px] bg-[#e2e0dd]"></i>
<div class="w-[176px] text-center">English (USA)</div>
<i class="w-px h-[15px] bg-[#e2e0dd]"></i>
<div class="w-[45px]"></div>
<div class="w-[30px] flex items-center pl-[5px]"><svg width="24" height="14" fill="none"><rect x="1.500" y="3.500" width="12" height="7" fill="#e8f1fa" stroke="#4a90c8"/><path d="M16 1h4M16 13h4M18 1v12" stroke="#444"/></svg></div>
<i class="w-px h-[15px] bg-[#e2e0dd]"></i>
<div class="w-[19px]"></div>
<i class="w-px h-[15px] bg-[#e2e0dd]"></i>
<div class="w-[19px]"></div>
<i class="w-px h-[15px] bg-[#e2e0dd]"></i>
<div class="w-[191px] text-center">Average: ; Sum: 0</div>
<i class="w-px h-[15px] bg-[#e2e0dd]"></i>
<div class="w-[97px] flex items-center pl-[5px]"><svg width="92" height="13" fill="none" stroke="#444"><path d="M0 6.500h6" stroke-width="1.500"/><path d="M10 6.500h65" stroke="#999"/><rect x="40.500" y="3.500" width="3" height="6" fill="#f6f5f4"/><path d="M79 6.500h6M82 3v7" stroke-width="1.500"/></svg></div>
<i class="w-px h-[15px] bg-[#e2e0dd]"></i>
<div class="flex-1 text-center">100%</div>
</footer>
</body></html>
